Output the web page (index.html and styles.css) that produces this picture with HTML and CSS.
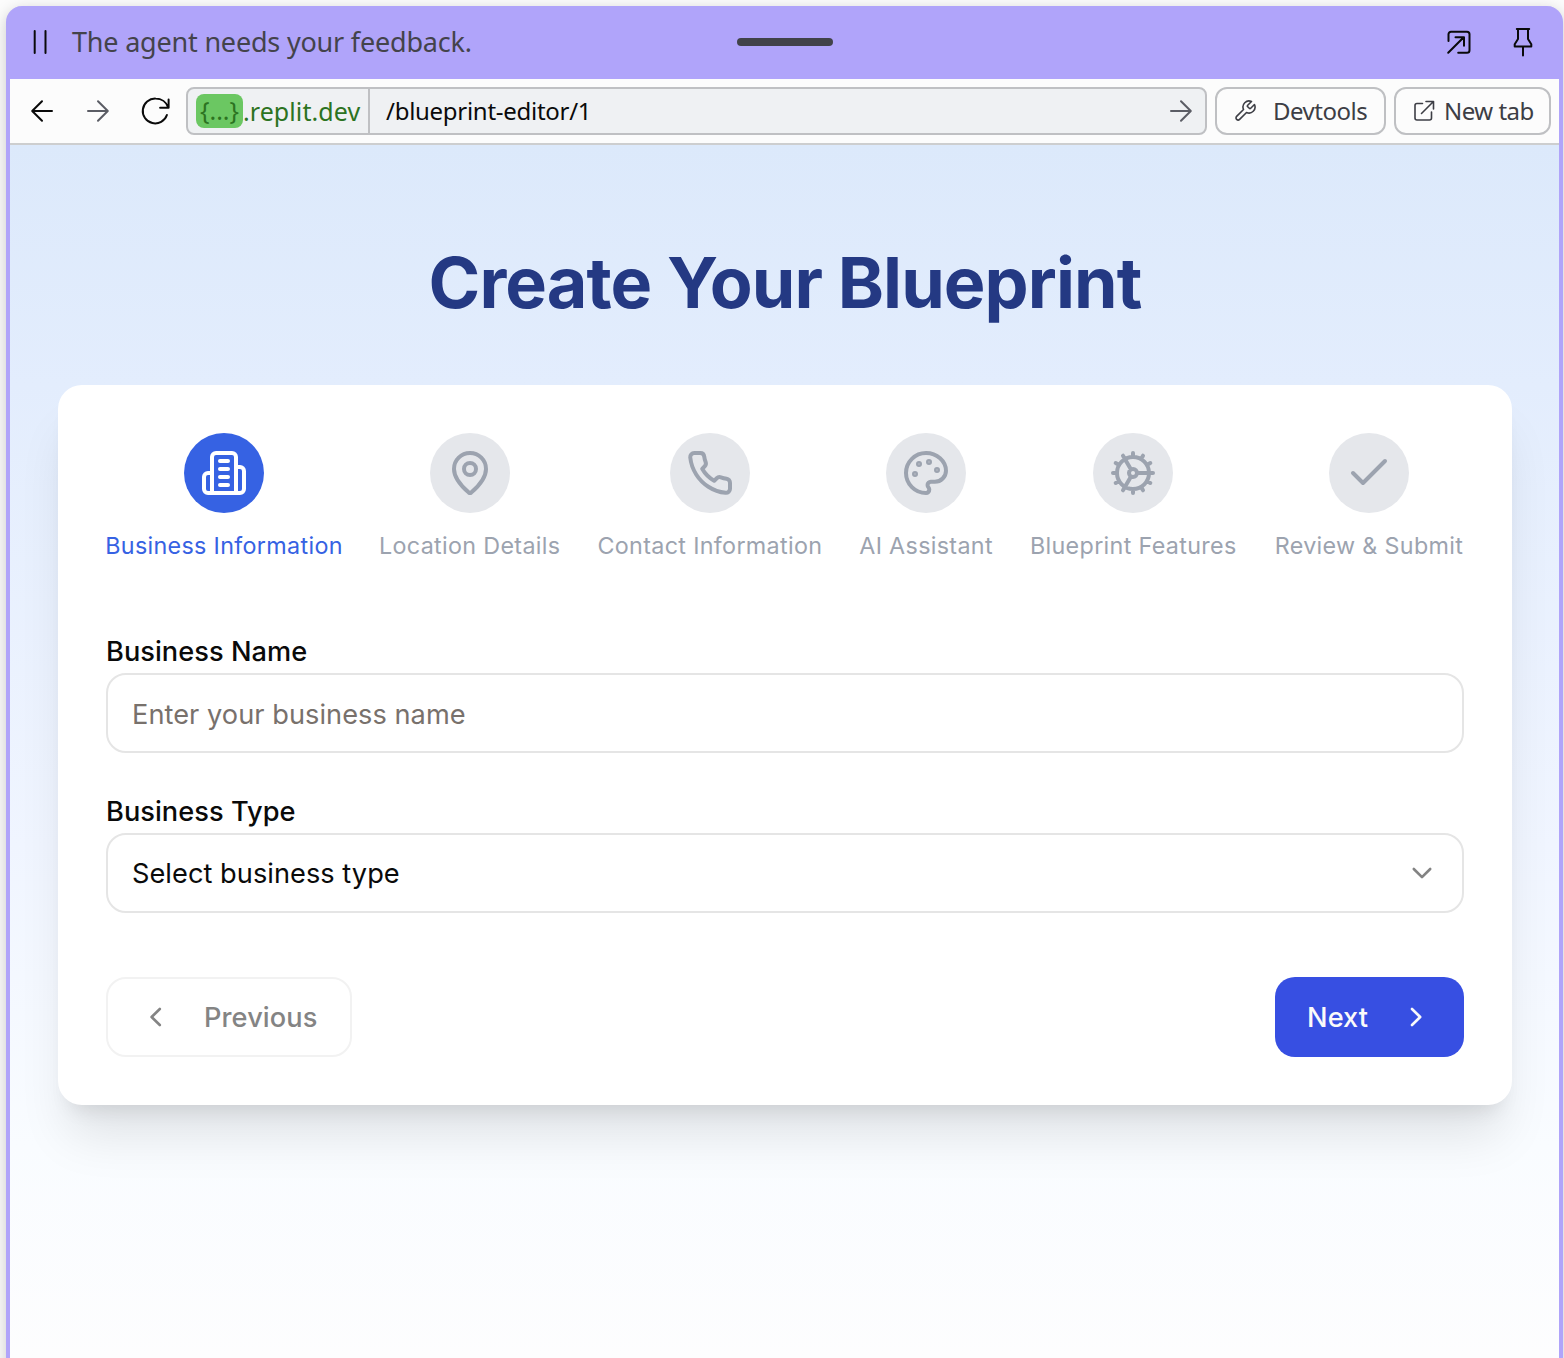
FILE: index.html
```html
<!DOCTYPE html>
<html lang="en">
<head>
<meta charset="utf-8">
<title>Create Your Blueprint</title>
<link rel="stylesheet" href="styles.css">
</head>
<body>
<div class="window">
  <header class="agent-bar">
    <div class="agent-status">
      <svg width="24" height="32" viewBox="0 0 24 32"><path d="M6.700 5v22M17.500 5v22" /></svg>
      <span class="agent-text">The agent needs your feedback.</span>
    </div>
    <span class="handle"></span>
    <div class="agent-actions">
      <svg width="32" height="32" viewBox="0 0 32 32"><path d="M5.500 15V8.200a2.500 2.500 0 0 1 2.500-2.500h16a2.500 2.500 0 0 1 2.500 2.500v16a2.500 2.500 0 0 1-2.500 2.500H15.200M5.200 26.800l15.500-15.500M12.500 11.300h8.500v8.500"/></svg>
      <svg width="32" height="32" viewBox="0 0 32 32"><path d="M9.800 2.900h12.400M11 3v10l-3.300 5.200v2.300h16.600v-2.300L21 13V3M16 20.500v9"/></svg>
    </div>
  </header>
  <nav class="toolbar">
    <div class="nav-icons">
      <svg width="32" height="32" viewBox="0 0 32 32"><path d="M26 16H6.300M16 6.200L6.200 16l9.800 9.800"/></svg>
      <svg class="dim" width="32" height="32" viewBox="0 0 32 32"><path d="M6 16h19.700M16 6.200l9.800 9.800-9.800 9.800"/></svg>
      <svg width="32" height="32" viewBox="0 0 32 32"><path d="M31.200 4.500v8.300h-8.500M30.800 12.500C29 7 24 3.600 18.200 3.600A12.400 12.400 0 1 0 29.500 20" transform="translate(-0.600 0)"/></svg>
    </div>
    <div class="url">
      <div class="host"><span class="chip">{...}</span><span class="domain">.replit.dev</span></div>
      <div class="path"><span class="path-text">/blueprint-editor/1</span>
        <svg class="dim" width="32" height="32" viewBox="0 0 32 32"><path d="M6 16h19.700M16 6.200l9.800 9.800-9.800 9.800"/></svg>
      </div>
    </div>
    <button class="tool devtools"><svg width="24" height="24" viewBox="0 0 24 24"><path d="M14.700 6.300a1 1 0 0 0 0 1.400l1.600 1.600a1 1 0 0 0 1.400 0l3.770-3.770a6 6 0 0 1-7.940 7.940l-6.910 6.910a2.120 2.120 0 0 1-3-3l6.910-6.910a6 6 0 0 1 7.940-7.940l-3.760 3.760z"/></svg><span>Devtools</span></button>
    <button class="tool newtab"><svg width="24" height="24" viewBox="0 0 24 24"><path d="M10.500 4.500H5a2 2 0 0 0-2 2V19a2 2 0 0 0 2 2h12.500a2 2 0 0 0 2-2v-6M14 2.500h7.500V10M21.200 2.800L9.500 14.500"/></svg><span>New tab</span></button>
  </nav>
  <main class="page">
    <h1>Create Your Blueprint</h1>
    <section class="card">
      <ol class="steps">
        <li class="step active"><div class="dot"><svg viewBox="0 0 24 24"><path d="M6 22V4a2 2 0 0 1 2-2h8a2 2 0 0 1 2 2v18ZM6 12H4a2 2 0 0 0-2 2v6a2 2 0 0 0 2 2h2M18 9h2a2 2 0 0 1 2 2v9a2 2 0 0 1-2 2h-2M10 6h4M10 10h4M10 14h4M10 18h4"/></svg></div><span>Business Information</span></li>
        <li class="step"><div class="dot"><svg viewBox="0 0 24 24"><path d="M20 10c0 4.993-5.539 10.193-7.399 11.799a1 1 0 0 1-1.202 0C9.539 20.193 4 14.993 4 10a8 8 0 0 1 16 0"/><circle cx="12" cy="10" r="3"/></svg></div><span>Location Details</span></li>
        <li class="step"><div class="dot"><svg viewBox="0 0 24 24"><path d="M22 16.920v3a2 2 0 0 1-2.180 2 19.790 19.790 0 0 1-8.630-3.070 19.500 19.500 0 0 1-6-6 19.790 19.790 0 0 1-3.070-8.670A2 2 0 0 1 4.110 2h3a2 2 0 0 1 2 1.720 12.840 12.840 0 0 0 .7 2.810 2 2 0 0 1-.45 2.110L8.090 9.910a16 16 0 0 0 6 6l1.270-1.270a2 2 0 0 1 2.110-.45 12.840 12.840 0 0 0 2.810.7A2 2 0 0 1 22 16.920z"/></svg></div><span>Contact Information</span></li>
        <li class="step"><div class="dot"><svg viewBox="0 0 24 24"><g fill="currentColor"><circle cx="13.500" cy="6.500" r=".5"/><circle cx="17.500" cy="10.500" r=".5"/><circle cx="8.500" cy="7.500" r=".5"/><circle cx="6.500" cy="12.500" r=".5"/></g><path d="M12 2C6.500 2 2 6.500 2 12s4.500 10 10 10c.926 0 1.648-.746 1.648-1.688 0-.437-.18-.835-.437-1.125-.29-.289-.438-.652-.438-1.125a1.640 1.640 0 0 1 1.668-1.668h1.996c3.051 0 5.555-2.503 5.555-5.554C21.965 6.012 17.461 2 12 2z"/></svg></div><span>AI Assistant</span></li>
        <li class="step"><div class="dot"><svg viewBox="0 0 24 24"><path d="M12 20a8 8 0 1 0 0-16 8 8 0 0 0 0 16ZM12 14a2 2 0 1 0 0-4 2 2 0 0 0 0 4ZM12 2v2M12 22v-2M17 20.660l-1-1.730M11 10.270L7 3.340M20.660 17l-1.730-1M3.340 7l1.730 1M14 12h8M2 12h2M20.660 7l-1.730 1M3.340 17l1.730-1M17 3.340l-1 1.730M11 13.730l-4 6.930"/></svg></div><span>Blueprint Features</span></li>
        <li class="step"><div class="dot"><svg viewBox="0 0 24 24"><path d="M20 6L9 17l-5-5"/></svg></div><span>Review &amp; Submit</span></li>
      </ol>
      <form class="form">
        <label class="label">Business Name</label>
        <div class="field placeholder"><span>Enter your business name</span></div>
        <label class="label">Business Type</label>
        <div class="field select"><span>Select business type</span><svg width="32" height="32" viewBox="0 0 32 32"><path d="M7.800 12l8.200 8.200 8.200-8.200"/></svg></div>
        <div class="actions">
          <button type="button" class="btn prev"><svg width="32" height="32" viewBox="0 0 32 32"><path d="M20.800 8l-8.200 8 8.200 8"/></svg><span>Previous</span></button>
          <button type="button" class="btn next"><span>Next</span><svg width="32" height="32" viewBox="0 0 32 32"><path d="M12 8l8.200 8-8.200 8"/></svg></button>
        </div>
      </form>
    </section>
  </main>
</div>
</body>
</html>
```
FILE: styles.css
```css
* { box-sizing: border-box; }
body { margin: 0; height: 1358px; overflow: hidden; background: #fcfcfc; font-family: Inter, "Liberation Sans", sans-serif; }
svg { display: block; flex: none; fill: none; stroke: currentColor; stroke-width: 2; stroke-linecap: round; stroke-linejoin: round; }
button { font: inherit; margin: 0; padding: 0; }
.window { margin: 6px 1px 0 6px; width: 1557px; height: 1400px; border: 4px solid #b0a4fa; border-top: 0; border-radius: 16px 16px 0 0; background: #b0a4fa; box-shadow: 0 4px 16px rgba(0,0,0,.2); display: flex; flex-direction: column; }
.agent-bar { height: 73px; flex: none; display: grid; grid-template-columns: 1fr 96px 1fr; align-items: center; padding: 0 20px 2px 18px; color: #0a0a0a; }
.agent-status { display: flex; align-items: center; gap: 20px; }
.agent-text { font: 27px/36px "Noto Sans", sans-serif; color: #44434b; letter-spacing: -.2px; white-space: nowrap; }
.handle { width: 96px; height: 8px; border-radius: 4px; background: #414249; margin-left: 1px; }
.agent-actions { display: flex; gap: 32px; justify-content: flex-end; }
.toolbar { height: 66px; flex: none; display: flex; align-items: center; background: #fcfcfc; border-bottom: 2px solid #cdcecf; padding: 0 8px 0 16px; font-family: "Noto Sans", sans-serif; color: #0a0a0a; }
.nav-icons { display: flex; gap: 24px; width: 160px; }
.dim { color: #5b5d65; }
.url { display: flex; width: 1021px; height: 48px; border: 2px solid #bfc0c3; border-radius: 8px; background: #eff1f3; }
.host { width: 182px; border-right: 2px solid #bfc0c3; display: flex; align-items: center; padding-left: 8px; font-size: 25px; color: #2c7321; }
.chip { width: 47px; height: 34px; line-height: 32px; border-radius: 8px; background: #6bc762; text-align: center; }
.domain { letter-spacing: .08px; }
.path { flex: 1; display: flex; justify-content: space-between; align-items: center; padding: 0 8px 0 16px; font-size: 24px; letter-spacing: -.28px; }
.path-text { padding-bottom: 2px; }
.tool { height: 48px; border: 2px solid #bfc0c3; border-radius: 12px; background: #fcfcfc; color: #3d3e45; display: flex; align-items: center; font-size: 24px; letter-spacing: -.5px; margin-left: 8px; white-space: nowrap; }
.tool span { padding-bottom: 1px; }
.tool svg { stroke-width: 1.600; }
.devtools { width: 171px; padding-left: 16px; gap: 16px; }
.newtab { width: 157px; padding-left: 16px; gap: 8px; }
.page { flex: 1; padding: 92px 47px 0 48px; background: linear-gradient(180deg, #dce9fb 0, #e3edfd 240px, #f0f5ff 700px, #f9fcff 1000px, #fdfdfe 1213px); }
h1 { margin: 0; height: 92px; line-height: 91px; font-size: 70px; font-weight: 700; text-align: center; color: #243983; white-space: nowrap; letter-spacing: -.900px; }
.card { margin-top: 56px; height: 720px; border-radius: 24px; background: #fff; padding: 48px; box-shadow: 0 40px 50px -10px rgba(0,0,0,.1), 0 16px 20px -12px rgba(0,0,0,.1); }
.steps { list-style: none; margin: 0; padding: 0; display: grid; grid-template-columns: 236px 181px 225px 133px 207px 190px; justify-content: space-between; }
.step { display: flex; flex-direction: column; align-items: center; gap: 17px; font-size: 23.300px; letter-spacing: .33px; line-height: 32px; color: #9ca3af; white-space: nowrap; }
.dot { width: 80px; height: 80px; border-radius: 50%; background: #e5e7eb; display: grid; place-items: center; }
.dot svg { width: 48px; height: 48px; }
.active { color: #3662e3; }
.active .dot { background: #3662e3; color: #fff; }
.form { padding-top: 71px; letter-spacing: .04px; }
.label { display: block; height: 40px; line-height: 37px; font-size: 27.200px; font-weight: 500; color: #0a0a0a; }
.field { height: 80px; border: 2px solid #e5e5e5; border-radius: 20px; padding: 0 24px; display: flex; justify-content: space-between; align-items: center; font-size: 27.200px; color: #0a0a0a; margin-bottom: 40px; }
.placeholder { color: #78716c; }
.placeholder span { padding-top: 2px; }
.select span { padding-top: 1px; }
.select svg { color: #838383; }
.actions { display: flex; justify-content: space-between; margin-top: 64px; }
.btn { height: 80px; border: 0; border-radius: 20px; font-size: 27.200px; font-weight: 500; letter-spacing: .08px; display: flex; align-items: center; }
.btn span { padding-top: 1px; }
.prev { width: 246px; border: 2px solid #f2f2f2; background: #fff; color: #848484; padding-left: 31px; gap: 33px; }
.next { width: 189px; background: #374fe2; color: #fafafa; padding-left: 32px; gap: 32px; }
.btn svg, .select svg { stroke-width: 2.600; }
```
